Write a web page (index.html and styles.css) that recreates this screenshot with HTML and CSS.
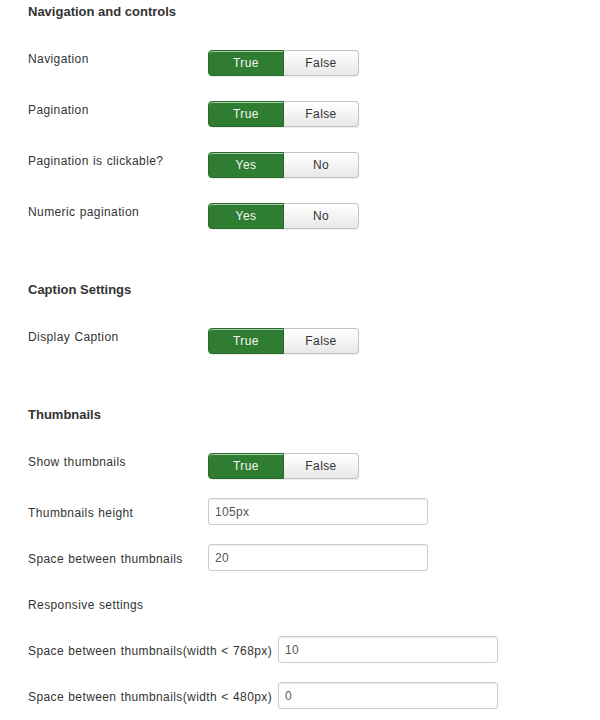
FILE: index.html
```html
<!DOCTYPE html>
<html>
<head>
<meta charset="utf-8">
<link rel="stylesheet" href="styles.css">
</head>
<body>
<div class="form">
  <h3 class="section first">Navigation and controls</h3>
  <div class="row">
    <label class="lbl">Navigation</label>
    <div class="toggle"><span class="opt on">True</span><span class="opt">False</span></div>
  </div>
  <div class="row">
    <label class="lbl">Pagination</label>
    <div class="toggle"><span class="opt on">True</span><span class="opt">False</span></div>
  </div>
  <div class="row">
    <label class="lbl">Pagination is clickable?</label>
    <div class="toggle"><span class="opt on">Yes</span><span class="opt">No</span></div>
  </div>
  <div class="row">
    <label class="lbl">Numeric pagination</label>
    <div class="toggle"><span class="opt on">Yes</span><span class="opt">No</span></div>
  </div>

  <h3 class="section">Caption Settings</h3>
  <div class="row">
    <label class="lbl">Display Caption</label>
    <div class="toggle"><span class="opt on">True</span><span class="opt">False</span></div>
  </div>

  <h3 class="section">Thumbnails</h3>
  <div class="row">
    <label class="lbl">Show thumbnails</label>
    <div class="toggle"><span class="opt on">True</span><span class="opt">False</span></div>
  </div>
  <div class="row input-row">
    <label class="lbl">Thumbnails height</label>
    <input class="field" type="text" value="105px">
  </div>
  <div class="row input-row">
    <label class="lbl">Space between thumbnails</label>
    <input class="field" type="text" value="20">
  </div>
  <div class="row input-row">
    <label class="lbl">Responsive settings</label>
  </div>
  <div class="row input-row">
    <label class="lbl">Space between thumbnails(width &lt; 768px)</label>
    <input class="field" type="text" value="10">
  </div>
  <div class="row input-row">
    <label class="lbl">Space between thumbnails(width &lt; 480px)</label>
    <input class="field" type="text" value="0">
  </div>
</div>
</body>
</html>
```

FILE: styles.css
```css
html, body {
  margin: 0;
  padding: 0;
  background: #ffffff;
}
body {
  font-family: "Liberation Sans", Arial, sans-serif;
  font-size: 12px;
  color: #333333;
}
.form {
  padding: 3px 0 0 28px;
}
.section {
  margin: 52px 0 23px;
  font-size: 13px;
  line-height: 18px;
  font-weight: bold;
  color: #333333;
}
.section.first {
  margin-top: 0;
}
.row {
  display: flex;
  align-items: flex-start;
  margin-bottom: 19px;
}
.input-row {
  margin-bottom: 18px;
  min-height: 28px;
}
.lbl {
  flex: 0 0 auto;
  min-width: 174px;
  padding: 6px 6px 4px 0;
  line-height: 18px;
  letter-spacing: 0.4px;
  word-spacing: 0.5px;
}
.toggle {
  display: flex;
  margin-top: 6px;
  height: 26px;
}
.opt {
  box-sizing: border-box;
  width: 76px;
  height: 26px;
  line-height: 24px;
  text-align: center;
  font-size: 12px;
  letter-spacing: 0.4px;
  color: #333333;
  border: 1px solid #c4c4c4;
  background: linear-gradient(#ffffff, #e8e8e8);
  box-shadow: inset 0 1px 0 rgba(255,255,255,0.6), 0 1px 1px rgba(0,0,0,0.08);
}
.opt:first-child {
  border-radius: 4px 0 0 4px;
}
.opt:last-child {
  border-radius: 0 4px 4px 0;
  border-left: 0;
  width: 75px;
}
.opt.on {
  background: #2f7d32;
  border-color: #276b2a;
  color: #f2f7f2;
}
.field {
  box-sizing: border-box;
  width: 220px;
  height: 27px;
  margin: 0;
  padding: 0 6px;
  border: 1px solid #cccccc;
  border-radius: 3px;
  box-shadow: inset 0 1px 1px rgba(0,0,0,0.075);
  font-family: "Liberation Sans", Arial, sans-serif;
  font-size: 12px;
  letter-spacing: 0.3px;
  color: #555555;
  background: #ffffff;
}
```
